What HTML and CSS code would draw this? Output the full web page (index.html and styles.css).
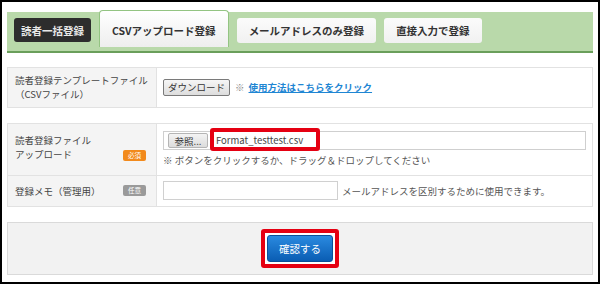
FILE: index.html
```html
<!DOCTYPE html>
<html lang="ja">
<head>
  <meta charset="utf-8">
  <title>読者一括登録</title>
  <link rel="stylesheet" href="styles.css">
</head>
<body>
  <div id="frame">
    <div class="tab-bar">
      <span class="tab tab-dark">読者一括登録</span>
      <span class="tab tab-active">CSVアップロード登録</span>
      <span class="tab">メールアドレスのみ登録</span>
      <span class="tab">直接入力で登録</span>
    </div>

    <div class="form-box">
      <div class="form-row row-template">
        <div class="form-label">
          <div class="label-text">読者登録テンプレートファイル<br>（CSVファイル）</div>
        </div>
        <div class="form-value">
          <button class="plain-button">ダウンロード</button>
          <span class="note-mark">※</span>
          <a class="help-link" href="#">使用方法はこちらをクリック</a>
        </div>
      </div>
    </div>

    <div class="form-box">
      <div class="form-row row-upload">
        <div class="form-label label-bottom">
          <div class="label-text">読者登録ファイル<br>アップロード</div>
          <span class="badge badge-required">必須</span>
        </div>
        <div class="form-value value-column">
          <div class="file-box">
            <button class="browse-button">参照...</button>
            <span class="file-name">Format_testtest.csv</span>
            <span class="highlight file-highlight"></span> <!-- annotation -->
          </div>
          <div class="hint">※ ボタンをクリックするか、ドラッグ＆ドロップしてください</div>
        </div>
      </div>
      <div class="form-row row-memo">
        <div class="form-label">
          <div class="label-text">登録メモ（管理用）</div>
          <span class="badge badge-optional">任意</span>
        </div>
        <div class="form-value">
          <input type="text" class="memo-input">
          <span class="memo-note">メールアドレスを区別するために使用できます。</span>
        </div>
      </div>
    </div>

    <div class="submit-panel">
      <span class="highlight-wrap">
        <button class="submit-button">確認する</button>
      </span>
    </div>
  </div>
</body>
</html>
```

FILE: styles.css
```css
html, body {
  margin: 0;
  padding: 0;
}

body {
  font-family: "Noto Sans CJK JP", "Noto Sans", sans-serif;
  font-size: 9.5px;
  color: #444444;
  background-color: #ffffff;
}

#frame {
  width: 600px;
  height: 284px;
  box-sizing: border-box;
  border: 2px solid #000000;
  padding: 10px 5px 7px 5px;
  display: flex;
  flex-direction: column;
}

/* Tabs */
.tab-bar {
  height: 35px;
  background-color: #b9d9aa;
  border-bottom: 2px solid #6a9f5b;
  display: flex;
  align-items: flex-start;
  gap: 8px;
  padding: 6px 7px 0 7px;
  box-sizing: content-box;
}

.tab {
  height: 25px;
  box-sizing: border-box;
  padding: 0 12px;
  display: flex;
  align-items: center;
  font-size: 10.5px;
  font-weight: bold;
  color: #333333;
  background: linear-gradient(#fbfbfb, #f1f1f1);
  border-radius: 3px;
  white-space: nowrap;
}

.tab-dark {
  height: 24px;
  padding: 0 7px;
  background: #2d2d2d;
  color: #e8e8e8;
}

.tab-active {
  height: 37px;
  margin-top: -8px;
  padding: 3px 12px 0 12px;
  background: linear-gradient(#ffffff, #eeeeee);
  border: 1px solid #93c482;
  border-bottom: none;
  border-radius: 4px 4px 0 0;
}

/* Form */
.form-box {
  margin-top: 14px;
  border: 1px solid #e2e2e2;
}

.form-box + .form-box {
  margin-top: 15px;
}

.form-row {
  display: grid;
  grid-template-columns: 149px 1fr;
}

.form-row + .form-row {
  border-top: 1px solid #e2e2e2;
}

.row-template { height: 39px; }
.row-upload { height: 51px; }
.row-memo { height: 30px; }

.form-label {
  background-color: #f4f4f4;
  border-right: 1px solid #e2e2e2;
  padding: 0 10px 0 7px;
  display: flex;
  align-items: center;
  justify-content: space-between;
}

.label-bottom .badge {
  align-self: flex-end;
  margin-bottom: 14px;
}

.label-text {
  line-height: 14px;
  white-space: nowrap;
}

.row-upload .label-text {
  margin-top: -4px;
}

.badge {
  width: 23px;
  height: 11px;
  border-radius: 2px;
  color: #ffffff;
  font-size: 6.5px;
  line-height: 11px;
  text-align: center;
}

.badge-required { background-color: #f28a1c; }
.badge-optional { background-color: #9a9a9a; }

.form-value {
  padding: 0 6px;
  display: flex;
  align-items: center;
}

.value-column {
  flex-direction: column;
  align-items: stretch;
  padding-top: 7px;
}

button {
  font-family: inherit;
  cursor: pointer;
}

.plain-button {
  height: 17px;
  padding: 0 4px;
  font-size: 9.5px;
  color: #333333;
  background: linear-gradient(#f6f6f6, #dddddd);
  border: 1px solid #7a7a7a;
  border-radius: 2px;
}

.note-mark {
  margin-left: 5px;
  color: #888888;
}

.help-link {
  margin-left: 4px;
  color: #1f86d3;
  font-weight: bold;
  text-decoration: underline;
}

.file-box {
  position: relative;
  height: 19px;
  box-sizing: border-box;
  border: 1px solid #cfcfcf;
  display: flex;
  align-items: center;
  padding-left: 4px;
}

.browse-button {
  width: 40px;
  height: 15px;
  padding: 0;
  font-size: 9.5px;
  color: #333333;
  background: linear-gradient(#f4f4f4, #dcdcdc);
  border: 1px solid #b5b5b5;
  border-radius: 2px;
}

.file-name {
  margin-left: 8px;
  color: #444444;
}

.highlight {
  border: 4px solid #e50012;
  border-radius: 3px;
}

.file-highlight {
  position: absolute;
  left: 46px;
  top: -4px;
  width: 110px;
  height: 23px;
  box-sizing: border-box;
}

.hint {
  margin-top: 3px;
  line-height: 14px;
  color: #555555;
}

.memo-input {
  width: 175px;
  height: 19px;
  box-sizing: border-box;
  margin: 0;
  border: 1px solid #d0d0d0;
  padding: 0 3px;
}

.memo-note {
  margin-left: 4px;
  color: #555555;
}

/* Submit */
.submit-panel {
  margin-top: 15px;
  height: 57px;
  box-sizing: border-box;
  background-color: #f2f2f2;
  border: 1px solid #dadada;
  display: flex;
  align-items: center;
  justify-content: center;
}

.highlight-wrap {
  display: flex;
  padding: 2px;
  background-color: #ffffff;
  border: 4px solid #e50012;
  border-radius: 3px;
  margin-top: 1px;
}

.submit-button {
  width: 66px;
  height: 27px;
  font-size: 10.5px;
  color: #ffffff;
  background: linear-gradient(#2a8ae0, #0a5db3);
  border: 1px solid #0a4f98;
  border-radius: 3px;
}
```
